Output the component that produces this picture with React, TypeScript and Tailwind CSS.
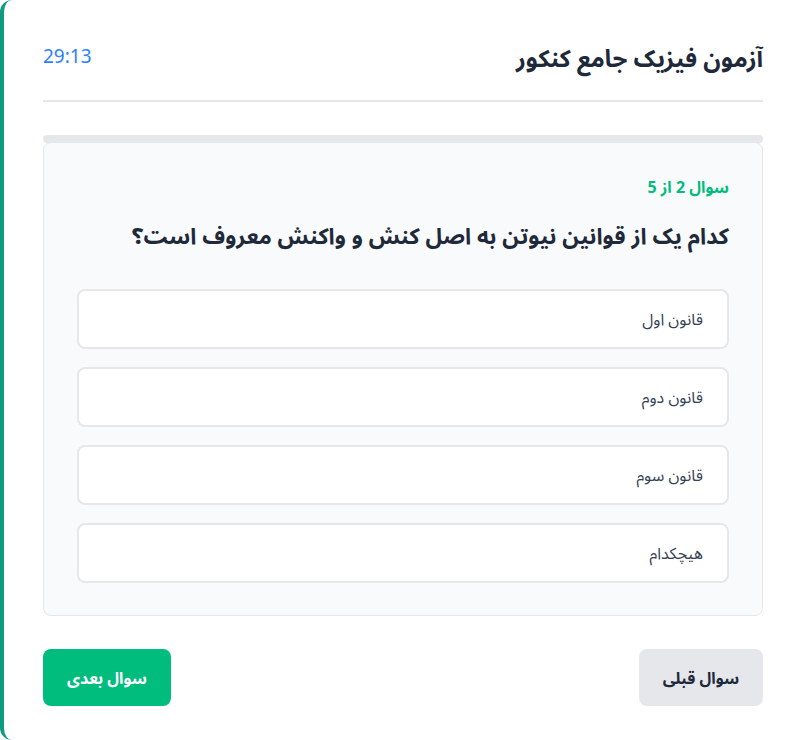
import { useState } from "react";

export default function App() {
  const [selected, setSelected] = useState<number | null>(null);

  const options = ["قانون اول", "قانون دوم", "قانون سوم", "هیچکدام"];

  return (
    <div
      className="w-[789px] h-[740px] overflow-hidden bg-white"
      style={{ fontFamily: '"Noto Sans", "Noto Sans Arabic", "DejaVu Sans", sans-serif' }}
    >
      <div dir="rtl" className="w-[806px] rounded-xl border-l-4 border-[#0f9b80] bg-white pr-[43px] pl-[39px] pt-[42px] pb-[34px]">
        {/* header */}
        <div className="flex items-center justify-between pb-[26px] border-b-2 border-gray-200">
          <h1 className="text-2xl leading-8 font-bold text-gray-800">آزمون فیزیک جامع کنکور</h1>
          <span className="text-[19px] leading-7 text-blue-500 -mt-1">29:13</span>
        </div>

        {/* progress */}
        <div className="mt-[33px] h-2 rounded-full bg-gray-200" />

        {/* question */}
        <div className="-mt-px rounded-lg border border-gray-200 bg-gray-50 px-[33px] pt-[32px] pb-[32px]">
          <p className="text-base leading-6 font-bold text-emerald-500">سوال 2 از 5</p>
          <h2 className="mt-[21px] text-[22.4px] leading-8 font-bold text-gray-800">
            کدام یک از قوانین نیوتن به اصل کنش و واکنش معروف است؟
          </h2>
          <div className="mt-[37px] flex flex-col gap-[18px]">
            {options.map((opt, idx) => (
              <button
                key={idx}
                onClick={() => setSelected(idx)}
                className={`h-[60px] w-full rounded-lg border-2 bg-white px-6 text-right text-base text-gray-700 ${
                  selected === idx ? "border-emerald-500" : "border-gray-200"
                }`}
              >
                {opt}
              </button>
            ))}
          </div>
        </div>

        {/* nav */}
        <div className="mt-[33px] flex items-center justify-between">
          <button className="h-[57px] w-[124px] rounded-lg bg-gray-200 text-base font-bold text-gray-800">سوال قبلی</button>
          <button className="h-[57px] w-[128px] rounded-lg bg-emerald-500 text-base font-bold text-white">سوال بعدی</button>
        </div>
      </div>
    </div>
  );
}
